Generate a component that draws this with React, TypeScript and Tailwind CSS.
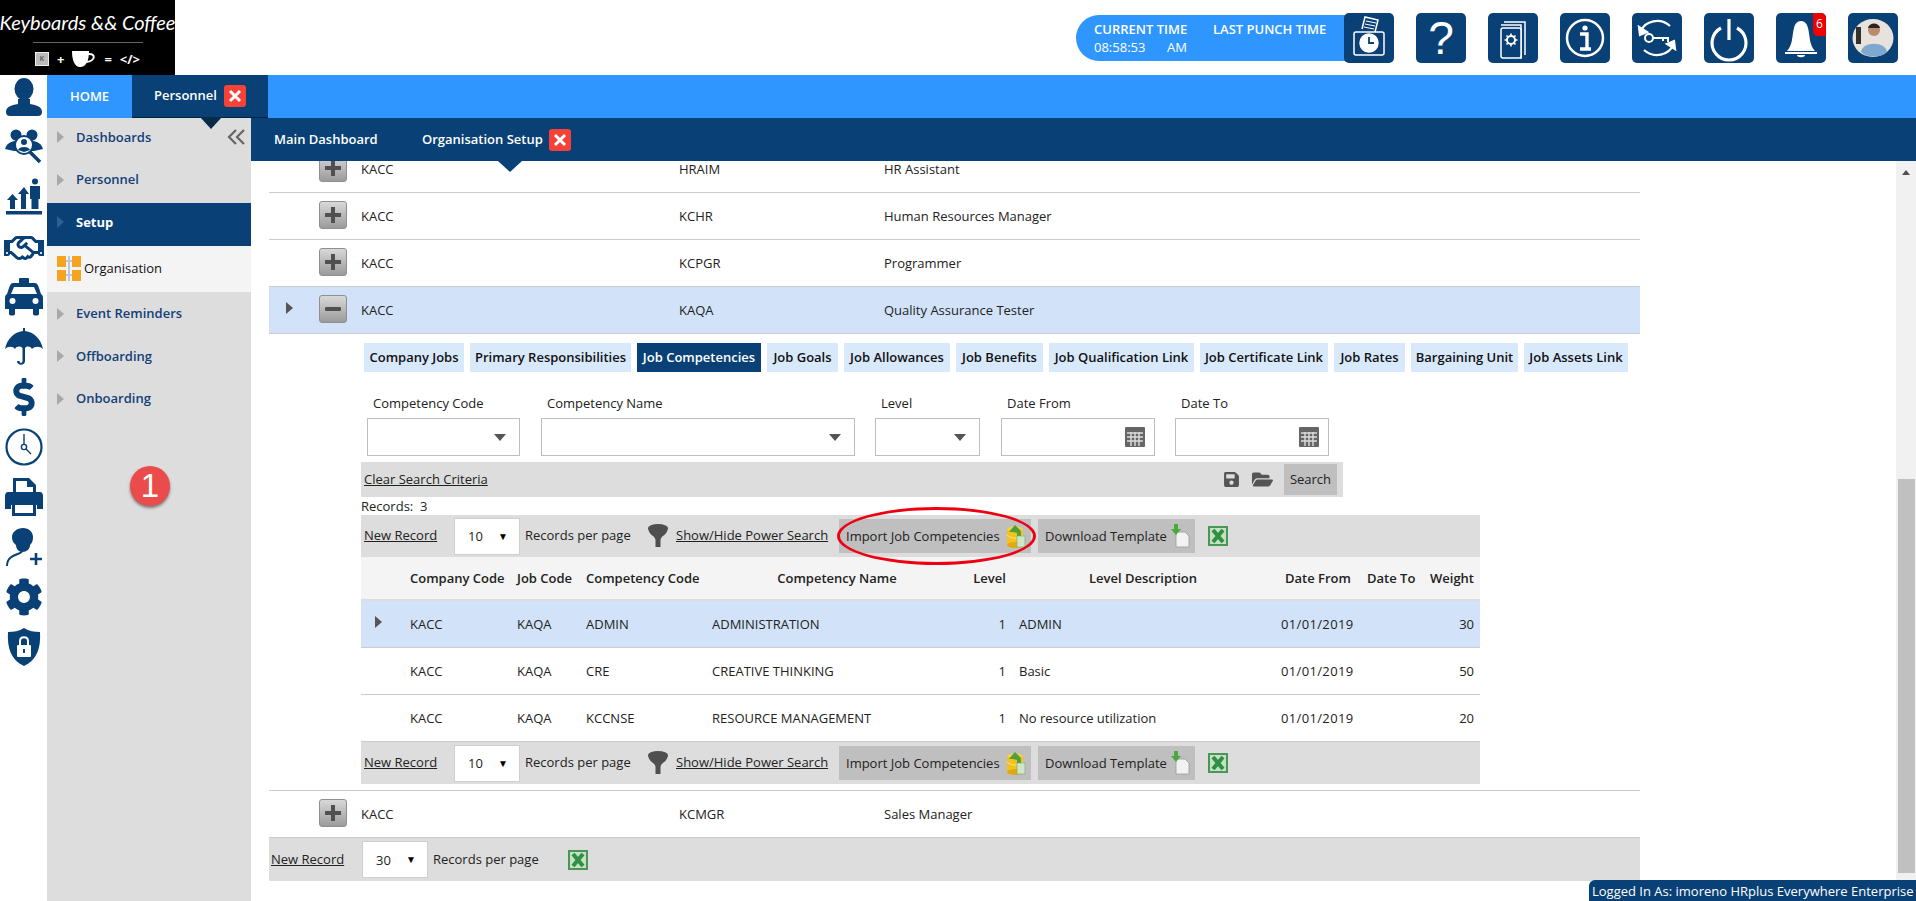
import { FaSave, FaFolderOpen, FaRegHandshake, FaCog, FaDollarSign } from "react-icons/fa";

const NAVY = "#094176";

const topIcons = ["punch", "help", "book", "info", "key", "power", "bell", "avatar"];

const jobTabs = [
  { label: "Company Jobs", w: "w-[100px]" },
  { label: "Primary Responsibilities", w: "w-[161px]" },
  { label: "Job Competencies", w: "w-[124px]", active: true },
  { label: "Job Goals", w: "w-[71px]" },
  { label: "Job Allowances", w: "w-[106px]" },
  { label: "Job Benefits", w: "w-[87px]" },
  { label: "Job Qualification Link", w: "w-[145px]" },
  { label: "Job Certificate Link", w: "w-[128px]" },
  { label: "Job Rates", w: "w-[71px]" },
  { label: "Bargaining Unit", w: "w-[107px]" },
  { label: "Job Assets Link", w: "w-[104px]" },
];

const competencies = [
  { code: "ADMIN", name: "ADMINISTRATION", desc: "ADMIN", weight: 30, active: true },
  { code: "CRE", name: "CREATIVE THINKING", desc: "Basic", weight: 50 },
  { code: "KCCNSE", name: "RESOURCE MANAGEMENT", desc: "No resource utilization", weight: 20 },
];

const childCols = "grid grid-cols-[49px_107px_69px_126px_254px_47px_268px_86px_61px_52px] items-center";
const jobCols = "grid grid-cols-[50px_42px_318px_205px_1fr] items-center";

function RailIcon({ name }: { name: string }) {
  const cls = "w-[38px] h-[38px]";
  switch (name) {
    case "user":
      return (
        <svg viewBox="0 0 38 38" className={cls} fill={NAVY}>
          <ellipse cx="19" cy="11" rx="9.5" ry="11" />
          <path d="M13 21 L25 21 L25 26 C32 27 37 29 37 34 C37 37 35 38 33 38 L5 38 C3 38 1 37 1 34 C1 29 6 27 13 26 Z" />
        </svg>
      );
    case "search":
      return (
        <svg viewBox="0 0 38 38" className={cls} fill={NAVY}>
          <circle cx="11" cy="7" r="5.5" />
          <circle cx="27" cy="7" r="5.5" />
          <path d="M0 21 C2 14 8 13 11 13 L27 13 C30 13 36 14 38 21 L29 23 L9 23 Z" />
          <circle cx="19" cy="17" r="9" fill="#fff" stroke={NAVY} strokeWidth="2" />
          <circle cx="19" cy="14" r="3" />
          <path d="M13 22 C14 18 24 18 25 22 L19 24 Z" />
          <path d="M25 24 L35 34" stroke={NAVY} strokeWidth="3.5" />
        </svg>
      );
    case "chart":
      return (
        <svg viewBox="0 0 38 38" className={cls} fill={NAVY}>
          <rect x="1" y="33" width="36" height="3.5" />
          <path d="M2 22 L7.5 16 L13 22 L10 22 L10 31 L5 31 L5 22 Z" />
          <path d="M13 16 L19 9 L24 16 L21 16 L21 31 L16 31 L16 16 Z" />
          <circle cx="30" cy="3.5" r="3" />
          <path d="M25 8 L35 8 L35 21 L33.5 21 L33.5 31 L26.5 31 L26.5 21 L25 21 Z" />
        </svg>
      );
    case "hands":
      return <FaRegHandshake size={40} color={NAVY} />;
    case "taxi":
      return (
        <svg viewBox="0 0 38 38" className={cls} fill={NAVY}>
          <rect x="14" y="0" width="10" height="6" rx="1" />
          <path d="M8 5 H30 C32 5 33 7 34 10 L36 16 C38 17 38 19 38 21 V31 H34 V36 C34 38 28 38 28 36 V31 H10 V36 C10 38 4 38 4 36 V31 H0 V21 C0 19 0 17 2 16 L4 10 C5 7 6 5 8 5 Z" />
          <path d="M9 9 H29 L32 16 H6 Z" fill="#fff" />
          <circle cx="7.5" cy="23" r="3" fill="#fff" />
          <circle cx="30.5" cy="23" r="3" fill="#fff" />
        </svg>
      );
    case "umbrella":
      return (
        <svg viewBox="0 0 38 38" className={cls} fill={NAVY}>
          <path d="M18 0 H20 V3 C29 4 36 11 38 21 C35 18 30 18 27 21 C25 18 22 18 20 20 V33 C20 38 12 38 12 33 H14.5 C14.5 35.5 17.5 35.5 17.5 33 V20 C15 18 12 18 10 21 C8 18 3 18 0 21 C2 11 9 4 18 3 Z" />
        </svg>
      );
    case "dollar":
      return <FaDollarSign size={38} color={NAVY} />;
    case "clock":
      return (
        <svg viewBox="0 0 38 38" className={cls} fill="none" stroke={NAVY}>
          <circle cx="19" cy="19" r="17.5" strokeWidth="2.2" />
          <path d="M19 6 V16.5 M21 21 L26 26" strokeWidth="1.4" />
          <circle cx="19" cy="19" r="2.6" strokeWidth="1.4" />
        </svg>
      );
    case "print":
      return (
        <svg viewBox="0 0 38 38" className={cls} fill={NAVY}>
          <path d="M8 0 H24 L31 7 V16 H28 V9 H22 V3 H11 V16 H8 Z" />
          <path d="M3 14 H35 C37 14 38 16 38 18 V31 H32 V27 H6 V31 H0 V18 C0 16 1 14 3 14 Z" />
          <path d="M7 24 H31 V38 H7 Z" />
          <path d="M10 27 H28 V35 H10 Z" fill="#fff" />
        </svg>
      );
    case "adduser":
      return (
        <svg viewBox="0 0 38 38" className={cls} fill={NAVY}>
          <path d="M18 0 C24 0 28 4 28 9 C28 13 27 15 25 17 C25 21 22 24 17 24 C13 24 11 20 11 17 C8 15 7 12 7 9 C7 4 12 0 18 0 Z" />
          <path d="M17 23 C17 27 2 25 2 38" fill="none" stroke={NAVY} strokeWidth="2" />
          <path d="M31 25 V37 M25 31 H37" stroke={NAVY} strokeWidth="2.6" />
        </svg>
      );
    case "gear":
      return <FaCog size={38} color={NAVY} />;
    default:
      return (
        <svg viewBox="0 0 38 38" className={cls} fill={NAVY}>
          <path d="M19 0 C24 3 29 4 35 4 C36 20 32 32 19 38 C6 32 2 20 3 4 C9 4 14 3 19 0 Z" />
          <rect x="12" y="17" width="14" height="12" rx="1" fill="#fff" />
          <path d="M15 17 V13 C15 8 23 8 23 13 V17" fill="none" stroke="#fff" strokeWidth="2" />
          <rect x="18" y="21" width="2" height="4" fill={NAVY} />
        </svg>
      );
  }
}

function TopIcon({ name }: { name: string }) {
  const s = { fill: "none", stroke: "#fff" };
  let inner = null;
  if (name === "punch") {
    inner = (
      <svg viewBox="0 0 50 50" className="w-full h-full" {...s} strokeWidth="1.5">
        <path d="M18 16 L21 4 L34 7 L31 19" fill={NAVY} />
        <path d="M22 8 L32 10 M21 11 L31 13 M20 14 L30 16" strokeWidth="1" />
        <rect x="10" y="19" width="30" height="23" rx="2" />
        <circle cx="25" cy="30" r="9" fill="#fff" />
        <path d="M25 24 V30 H30" stroke={NAVY} strokeWidth="1.8" />
      </svg>
    );
  } else if (name === "help") {
    inner = <span className="text-white text-[46px] leading-[50px] font-['Liberation_Sans',sans-serif] block text-center">?</span>;
  } else if (name === "book") {
    inner = (
      <svg viewBox="0 0 50 50" className="w-full h-full" {...s} strokeWidth="1.5">
        <path d="M16 9 H37 V42" />
        <path d="M13 12 H33 V46" />
        <rect x="13" y="15" width="20" height="30" rx="2" fill={NAVY} />
        <circle cx="23" cy="27" r="4" strokeWidth="2" />
        <path d="M23 20.5 V22.5 M23 31.5 V33.5 M16.5 27 H18.5 M27.5 27 H29.5 M18.5 22.5 L20 24 M26 30 L27.5 31.5 M27.5 22.5 L26 24 M20 30 L18.5 31.5" strokeWidth="1.6" />
      </svg>
    );
  } else if (name === "info") {
    inner = (
      <svg viewBox="0 0 50 50" className="w-full h-full" {...s} strokeWidth="2.5">
        <circle cx="25" cy="25" r="18" />
        <circle cx="25" cy="15" r="2.6" fill="#fff" stroke="none" />
        <path d="M20 21 H27 V35 M20 36 H31" strokeWidth="3.4" />
      </svg>
    );
  } else if (name === "key") {
    inner = (
      <svg viewBox="0 0 50 50" className="w-full h-full" {...s} strokeWidth="2.2">
        <path d="M9 18 C13 8 28 4 38 13" />
        <path d="M41 32 C37 42 22 46 12 37" />
        <path d="M7 14 L8 22 L15 19 Z" fill="#fff" />
        <path d="M43 36 L42 28 L35 31 Z" fill="#fff" />
        <circle cx="17" cy="25" r="4" strokeWidth="2" />
        <path d="M21 25 H36 V29 M31 25 V28" strokeWidth="2" />
      </svg>
    );
  } else if (name === "power") {
    inner = (
      <svg viewBox="0 0 50 50" className="w-full h-full" {...s} strokeWidth="3.2">
        <path d="M17 15 A17 17 0 1 0 33 15" />
        <path d="M25 6 V27" />
      </svg>
    );
  } else if (name === "bell") {
    inner = (
      <svg viewBox="0 0 50 50" className="w-full h-full" fill="#fff">
        <path d="M25 8 C29 8 31 11 32 15 C34 22 33 32 39 38 L11 38 C17 32 16 22 18 15 C19 11 21 8 25 8 Z" />
        <path d="M9 39 H41 V41 H9 Z" />
        <path d="M21 42 H29 C29 45 21 45 21 42 Z" />
      </svg>
    );
  } else {
    inner = (
      <svg viewBox="0 0 50 50" className="w-full h-full">
        <ellipse cx="25" cy="25" rx="20.5" ry="19" fill="#e7e3dc" />
        <circle cx="26" cy="17" r="6" fill="#b98c70" />
        <path d="M20 15 C21 9 31 9 32 15 Z" fill="#2c2320" />
        <path d="M13 39 C14 28 38 28 39 39 C33 45 19 45 13 39 Z" fill="#7fa8cf" />
        <rect x="8" y="14" width="5" height="17" fill="#33302d" />
      </svg>
    );
  }
  return (
    <div className="relative w-[50px] h-[50px] rounded-[5px] bg-[#094176] overflow-hidden shrink-0">
      {inner}
      {name === "bell" && (
        <span className="absolute right-0 top-0 w-[13px] h-[23px] bg-[#f00000] rounded-bl-[5px] text-white text-[12px] leading-[22px] text-center">6</span>
      )}
    </div>
  );
}

function CloseBtn() {
  return (
    <span className="w-[22px] h-[22px] rounded-[3px] bg-[#f44336] flex items-center justify-center shrink-0">
      <svg viewBox="0 0 14 14" className="w-[14px] h-[14px]" stroke="#fff" strokeWidth="3" fill="none">
        <path d="M2 2 L12 12 M12 2 L2 12" />
      </svg>
    </span>
  );
}

function Triangle({ color = "#a8a8a8" }: { color?: string }) {
  return (
    <svg viewBox="0 0 7 12" className="w-[7px] h-[12px] shrink-0" fill={color}>
      <path d="M0 0 L7 6 L0 12 Z" />
    </svg>
  );
}

function SideItem({ label, active }: { label: string; active?: boolean }) {
  return (
    <div className={`h-[42.5px] flex items-center pl-[10px] pb-[4px] gap-[12px] text-[13px] ${active ? "bg-[#094176] text-white font-bold" : "text-[#143f78] font-semibold"}`}>
      <Triangle color={active ? "#2f5f8e" : "#a8a8a8"} />
      {label}
    </div>
  );
}

function ExpandBtn({ minus }: { minus?: boolean }) {
  return (
    <span className="w-[28px] h-[28px] rounded-[3px] border border-[#8f8f8f] bg-gradient-to-b from-[#d9d9d9] to-[#9b9b9b] flex items-center justify-center">
      <svg viewBox="0 0 18 18" className="w-[18px] h-[18px]" fill="#505050">
        {minus ? <rect x="1" y="7" width="16" height="4" rx="1" /> : <path d="M7 1 H11 V7 H17 V11 H11 V17 H7 V11 H1 V7 H7 Z" />}
      </svg>
    </span>
  );
}

function JobRow({ code, title, expanded }: { code: string; title: string; expanded?: boolean }) {
  return (
    <div className={`${jobCols} h-[47px] border-b border-[#cccccc] text-[13px] text-[#222] ${expanded ? "bg-[#d2e3f9]" : ""}`}>
      <span className="pl-[17px] pb-[4px]">{expanded && <Triangle color="#555" />}</span>
      <span className="pb-[3px]">
        <ExpandBtn minus={expanded} />
      </span>
      <span className="pt-[1px]">KACC</span>
      <span className="pt-[1px]">{code}</span>
      <span className="pt-[1px]">{title}</span>
    </div>
  );
}

function Arrow() {
  return (
    <svg viewBox="0 0 12 7" className="w-[12px] h-[7px]" fill="#555">
      <path d="M0 0 H12 L6 7 Z" />
    </svg>
  );
}

function Field({ label, w, date }: { label: string; w: string; date?: boolean }) {
  return (
    <div className={w}>
      <div className="h-[24px] pl-[6px] leading-[19px] text-[13px] text-[#222]">{label}</div>
      <div className={`h-[38px] border border-[#bdbdbd] bg-white flex items-center justify-end ${date ? "pr-[9px]" : "pr-[13px]"}`}>
        {date ? (
          <svg viewBox="0 0 20 20" className="w-[20px] h-[20px]">
            <rect width="20" height="20" rx="1" fill="#666" />
            <path d="M2 6 H18 M2 10 H18 M2 14 H18 M6 5 V19 M10 5 V19 M14 5 V19" stroke="#ddd" strokeWidth="1.4" />
          </svg>
        ) : (
          <Arrow />
        )}
      </div>
    </div>
  );
}

function PageSize({ value }: { value: number }) {
  return (
    <div className="w-[66px] h-[37px] border border-[#cfcfcf] bg-white flex items-center justify-between pl-[13px] pr-[11px] text-[13px] text-[#222]">
      <span className="pt-[2px]">{value}</span>
      <span className="text-[10px] text-black">▼</span>
    </div>
  );
}

function ExcelIcon() {
  return (
    <svg viewBox="0 0 20 20" className="w-[20px] h-[20px] shrink-0">
      <rect width="20" height="20" fill="#4a9558" />
      <rect x="2" y="2" width="16" height="16" fill="#c5e0c4" />
      <path d="M5 4 L15 16 M15 4 L5 16" stroke="#2f8f42" strokeWidth="4" />
    </svg>
  );
}

function ImportIcon() {
  return (
    <svg viewBox="0 0 20 24" className="w-[20px] h-[24px] shrink-0">
      <ellipse cx="9" cy="6" rx="8" ry="3.5" fill="#f7d33a" />
      <rect x="1" y="6" width="16" height="15" fill="#f3c21c" />
      <ellipse cx="9" cy="21" rx="8" ry="3" fill="#e0a90f" />
      <path d="M1 11 C6 15 12 15 17 11" fill="none" stroke="#fbe48a" strokeWidth="1" />
      <path d="M3 8 L9 1 L13 5 C15 6 15 8 15 12 L11 12 L11 9 L7 8 Z" fill="#4f9e3a" />
      <rect x="11" y="12" width="8" height="11" fill="#cfe6c8" stroke="#7fae75" strokeWidth="0.7" />
    </svg>
  );
}

function DownloadIcon() {
  return (
    <svg viewBox="0 0 20 24" className="w-[20px] h-[24px] shrink-0">
      <path d="M6 8 H15 L19 12 V23 H6 Z" fill="#f2f2f2" stroke="#9a9a9a" strokeWidth="0.8" />
      <path d="M4 0 H8 V5 H11 L6 11 L1 5 H4 Z" fill="#49a83e" />
    </svg>
  );
}

function Funnel() {
  return (
    <svg viewBox="0 0 20 24" className="w-[20px] h-[24px] shrink-0" fill="#4f4f4f">
      <ellipse cx="10" cy="4" rx="10" ry="4" />
      <path d="M0 4 C1 12 7 11 7.5 16 V23 H12.5 V16 C13 11 19 12 20 4 Z" />
    </svg>
  );
}

function CompetencyToolbar({ highlight }: { highlight?: boolean }) {
  return (
    <div className="h-[42px] bg-[#dddddd] flex items-center text-[13px] text-[#222]">
      <a className="ml-[3px] w-[90px] underline">New Record</a>
      <PageSize value={10} />
      <span className="ml-[5px] w-[123px]">Records per page</span>
      <Funnel />
      <a className="ml-[8px] w-[163px] underline">Show/Hide Power Search</a>
      <div className="relative w-[192px] h-[34px] bg-[#bfbfbf] flex items-center justify-between pl-[7px] pr-[5px]">
        <span className="pt-[1px]">Import Job Competencies</span>
        <ImportIcon />
        {highlight && <span className="absolute -left-[2px] -top-[12px] w-[199px] h-[58px] rounded-[50%] border-[3px] border-[#ee0010]" />}
      </div>
      <div className="ml-[7px] w-[157px] h-[34px] bg-[#bfbfbf] flex items-center justify-between pl-[7px] pr-[5px]">
        <span className="pt-[1px]">Download Template</span>
        <DownloadIcon />
      </div>
      <span className="ml-[13px]">
        <ExcelIcon />
      </span>
    </div>
  );
}

export default function App() {
  return (
    <div className="w-screen h-screen overflow-hidden bg-white relative font-['Open_Sans',sans-serif]">
      {/* top strip */}
      <div className="h-[75px] flex">
        <div className="w-[175px] h-[75px] bg-black flex flex-col items-center text-white overflow-hidden">
          <div className="h-[42px] leading-[44px] text-[20px] italic whitespace-nowrap font-['Lato',sans-serif]">Keyboards &amp;&amp; Coffee</div>
          <div className="w-[110px] h-px bg-[#666]" />
          <div className="flex items-center gap-[8px] mt-[8px] text-[13px] font-bold leading-[16px]">
            <span className="w-[14px] h-[14px] bg-[#bbb] border border-[#eee] text-[7px] leading-[12px] text-center text-[#666]">K</span>
            +
            <svg viewBox="0 0 24 16" className="w-[24px] h-[16px]" fill="#fff">
              <path d="M0 0 H17 C17 10 14 16 8 16 C3 16 0 10 0 0 Z" />
              <path d="M16 3 C24 2 24 10 14 11" fill="none" stroke="#fff" strokeWidth="2" />
            </svg>
            =
            <span>&lt;/&gt;</span>
          </div>
        </div>
        <div className="flex-1 flex items-start justify-end pt-[13px] pr-[18px]">
          <div className="mt-[2px] -mr-[7px] w-[275px] h-[46px] rounded-l-[23px] bg-[#3096ff] text-white text-[13px] leading-[18px] pl-[18px] pt-[5px]">
            <div className="font-semibold">
              <span className="inline-block w-[119px]">CURRENT TIME</span>LAST PUNCH TIME
            </div>
            <div>
              <span className="inline-block w-[73px]">08:58:53</span>AM
            </div>
          </div>
          <div className="flex gap-[22px]">
            {topIcons.map((n) => (
              <TopIcon key={n} name={n} />
            ))}
          </div>
        </div>
      </div>

      <div className="flex h-[826px]">
        {/* icon rail */}
        <div className="w-[47px] shrink-0 flex flex-col items-center pt-[3px]">
          {["user", "search", "chart", "hands", "taxi", "umbrella", "dollar", "clock", "print", "adduser", "gear", "shield"].map((n) => (
            <div key={n} className="h-[50px] flex items-start justify-center">
              <RailIcon name={n} />
            </div>
          ))}
        </div>

        <div className="flex-1 flex flex-col min-w-0">
          {/* blue tab bar */}
          <div className="h-[43px] bg-[#3096ff] flex shrink-0 text-white text-[13px] font-semibold">
            <div className="w-[85px] flex items-center justify-center">HOME</div>
            <div className="relative w-[136px] bg-[#094176] flex items-center pl-[22px] gap-[7px] border-b border-[#03223f]">
              Personnel
              <CloseBtn />
              <span className="absolute left-[68px] top-[42px] z-10 w-0 h-0 border-x-[11px] border-x-transparent border-t-[12px] border-t-[#0a2a4a]" />
            </div>
          </div>

          <div className="flex-1 flex min-h-0">
            {/* sidebar */}
            <div className="relative w-[204px] shrink-0 bg-[#dddddd]">
              <svg viewBox="0 0 18 16" className="absolute right-[6px] top-[11px] w-[18px] h-[16px]" fill="none" stroke="#666" strokeWidth="2.2">
                <path d="M9 1 L2 8 L9 15 M17 1 L10 8 L17 15" />
              </svg>
              <SideItem label="Dashboards" />
              <SideItem label="Personnel" />
              <SideItem label="Setup" active />
              <div className="h-[46px] mb-[3px] bg-[#f4f4f4] flex items-center pl-[10px] gap-[3px] text-[13px] text-[#111]">
                <svg viewBox="0 0 24 25" className="w-[24px] h-[25px]">
                  <rect x="0" y="0" width="9" height="11" fill="#f5a320" />
                  <rect x="15" y="0" width="9" height="11" fill="#f5a320" />
                  <rect x="0" y="14" width="9" height="11" fill="#f5a320" />
                  <rect x="15" y="14" width="9" height="11" fill="#f5a320" />
                  <path d="M9 5 H15 M9 19 H15 M12 0 V25" stroke="#bcc6e0" strokeWidth="2" />
                </svg>
                Organisation
              </div>
              <SideItem label="Event Reminders" />
              <SideItem label="Offboarding" />
              <SideItem label="Onboarding" />
              <span className="absolute left-[83px] top-[348px] w-[40px] h-[40px] rounded-full bg-[#ea4c4c] shadow-[0_2px_3px_rgba(0,0,0,0.45)] text-white text-[33px] leading-[40px] text-center font-['Liberation_Sans',sans-serif]">
                1
              </span>
            </div>

            <div className="flex-1 flex flex-col min-w-0">
              {/* module tabs */}
              <div className="relative h-[43px] bg-[#094176] shrink-0 flex items-center text-white text-[13px] font-semibold">
                <span className="ml-[23px] w-[148px]">Main Dashboard</span>
                <span>Organisation Setup</span>
                <span className="ml-[6px]">
                  <CloseBtn />
                </span>
                <span className="absolute left-[247px] top-[43px] z-10 w-0 h-0 border-x-[12px] border-x-transparent border-t-[11px] border-t-[#094176]" />
              </div>

              <div className="flex-1 flex min-h-0">
                <div className="flex-1 overflow-hidden pl-[18px] min-w-0">
                  <div className="w-[1371px] -mt-[15px]">
                    <JobRow code="HRAIM" title="HR Assistant" />
                    <JobRow code="KCHR" title="Human Resources Manager" />
                    <JobRow code="KCPGR" title="Programmer" />
                    <JobRow code="KAQA" title="Quality Assurance Tester" expanded />

                    {/* expanded job detail */}
                    <div className="border-b border-[#cccccc] pl-[92px] pt-[9px] pb-[6px]">
                      <div className="w-[1119px]">
                        <div className="flex gap-[6px] pl-[3px] w-[1290px]">
                          {jobTabs.map((t) => (
                            <div
                              key={t.label}
                              className={`${t.w} h-[29px] shrink-0 flex items-center justify-center text-[13px] font-semibold whitespace-nowrap ${t.active ? "bg-[#094176] text-white" : "bg-[#d9e9fc] text-[#111]"}`}
                            >
                              {t.label}
                            </div>
                          ))}
                        </div>

                        <div className="flex gap-[20px] pl-[6px] mt-[22px]">
                          <Field label="Competency Code" w="w-[153px] mr-[1px]" />
                          <Field label="Competency Name" w="w-[314px]" />
                          <Field label="Level" w="w-[105px] mr-[1px]" />
                          <Field label="Date From" w="w-[154px]" date />
                          <Field label="Date To" w="w-[154px]" date />
                        </div>

                        <div className="w-[982px] h-[35px] mt-[6px] bg-[#dddddd] flex items-center text-[13px] text-[#222]">
                          <a className="ml-[3px] underline">Clear Search Criteria</a>
                          <FaSave className="ml-auto" size={17} color="#555" />
                          <FaFolderOpen className="ml-[12px]" size={21} color="#555" />
                          <span className="ml-[11px] mr-[6px] w-[53px] h-[31px] bg-[#bfbfbf] flex items-center justify-center">Search</span>
                        </div>

                        <div className="h-[18px] leading-[18px] text-[13px] text-[#222]">Records:&nbsp; 3</div>

                        <CompetencyToolbar highlight />

                        <div className={`${childCols} h-[44px] pt-[2px] bg-[#f4f4f4] border-b-2 border-[#dddddd] text-[13px] font-semibold text-[#222] whitespace-nowrap`}>
                          <span />
                          <span>Company Code</span>
                          <span>Job Code</span>
                          <span>Competency Code</span>
                          <span className="text-center pr-[4px]">Competency Name</span>
                          <span className="text-center">Level</span>
                          <span className="text-center pr-[8px]">Level Description</span>
                          <span className="pl-[4px]">Date From</span>
                          <span>Date To</span>
                          <span className="text-right pr-[6px]">Weight</span>
                        </div>

                        {competencies.map((c) => (
                          <div
                            key={c.code}
                            className={`${childCols} h-[47px] border-b border-[#cccccc] text-[13px] text-[#222] whitespace-nowrap ${c.active ? "bg-[#d2e3f9]" : ""}`}
                          >
                            <span className="pl-[14px] pb-[4px]">{c.active && <Triangle color="#555" />}</span>
                            <span className="pt-[1px]">KACC</span>
                            <span className="pt-[1px]">KAQA</span>
                            <span className="pt-[1px]">{c.code}</span>
                            <span className="pt-[1px]">{c.name}</span>
                            <span className="pt-[1px] pr-[7px] text-right">1</span>
                            <span className="pt-[1px] pl-[6px]">{c.desc}</span>
                            <span className="pt-[1px] tracking-[0.35px]">01/01/2019</span>
                            <span />
                            <span className="pt-[1px] text-right pr-[6px]">{c.weight}</span>
                          </div>
                        ))}

                        <CompetencyToolbar />
                      </div>
                    </div>

                    <JobRow code="KCMGR" title="Sales Manager" />

                    <div className="h-[43px] bg-[#dddddd] flex items-center text-[13px] text-[#222]">
                      <a className="ml-[2px] w-[91px] underline">New Record</a>
                      <PageSize value={30} />
                      <span className="ml-[5px] w-[135px]">Records per page</span>
                      <ExcelIcon />
                    </div>
                  </div>
                </div>

                {/* scrollbar */}
                <div className="w-[20px] shrink-0 bg-[#f1f1f1] flex flex-col items-center">
                  <svg viewBox="0 0 8 5" className="w-[8px] h-[5px] mt-[9px] shrink-0" fill="#505050">
                    <path d="M0 5 L4 0 L8 5 Z" />
                  </svg>
                  <div className="w-[17px] h-[394px] bg-[#c0c0c0] mt-[304px]" />
                </div>
              </div>
            </div>
          </div>
        </div>
      </div>

      <div className="absolute right-0 bottom-0 w-[327px] h-[21px] bg-[#094176] rounded-tl-[6px] text-white text-[13px] leading-[22px] pl-[3px] whitespace-nowrap">
        Logged In As: imoreno HRplus Everywhere Enterprise
      </div>
    </div>
  );
}
